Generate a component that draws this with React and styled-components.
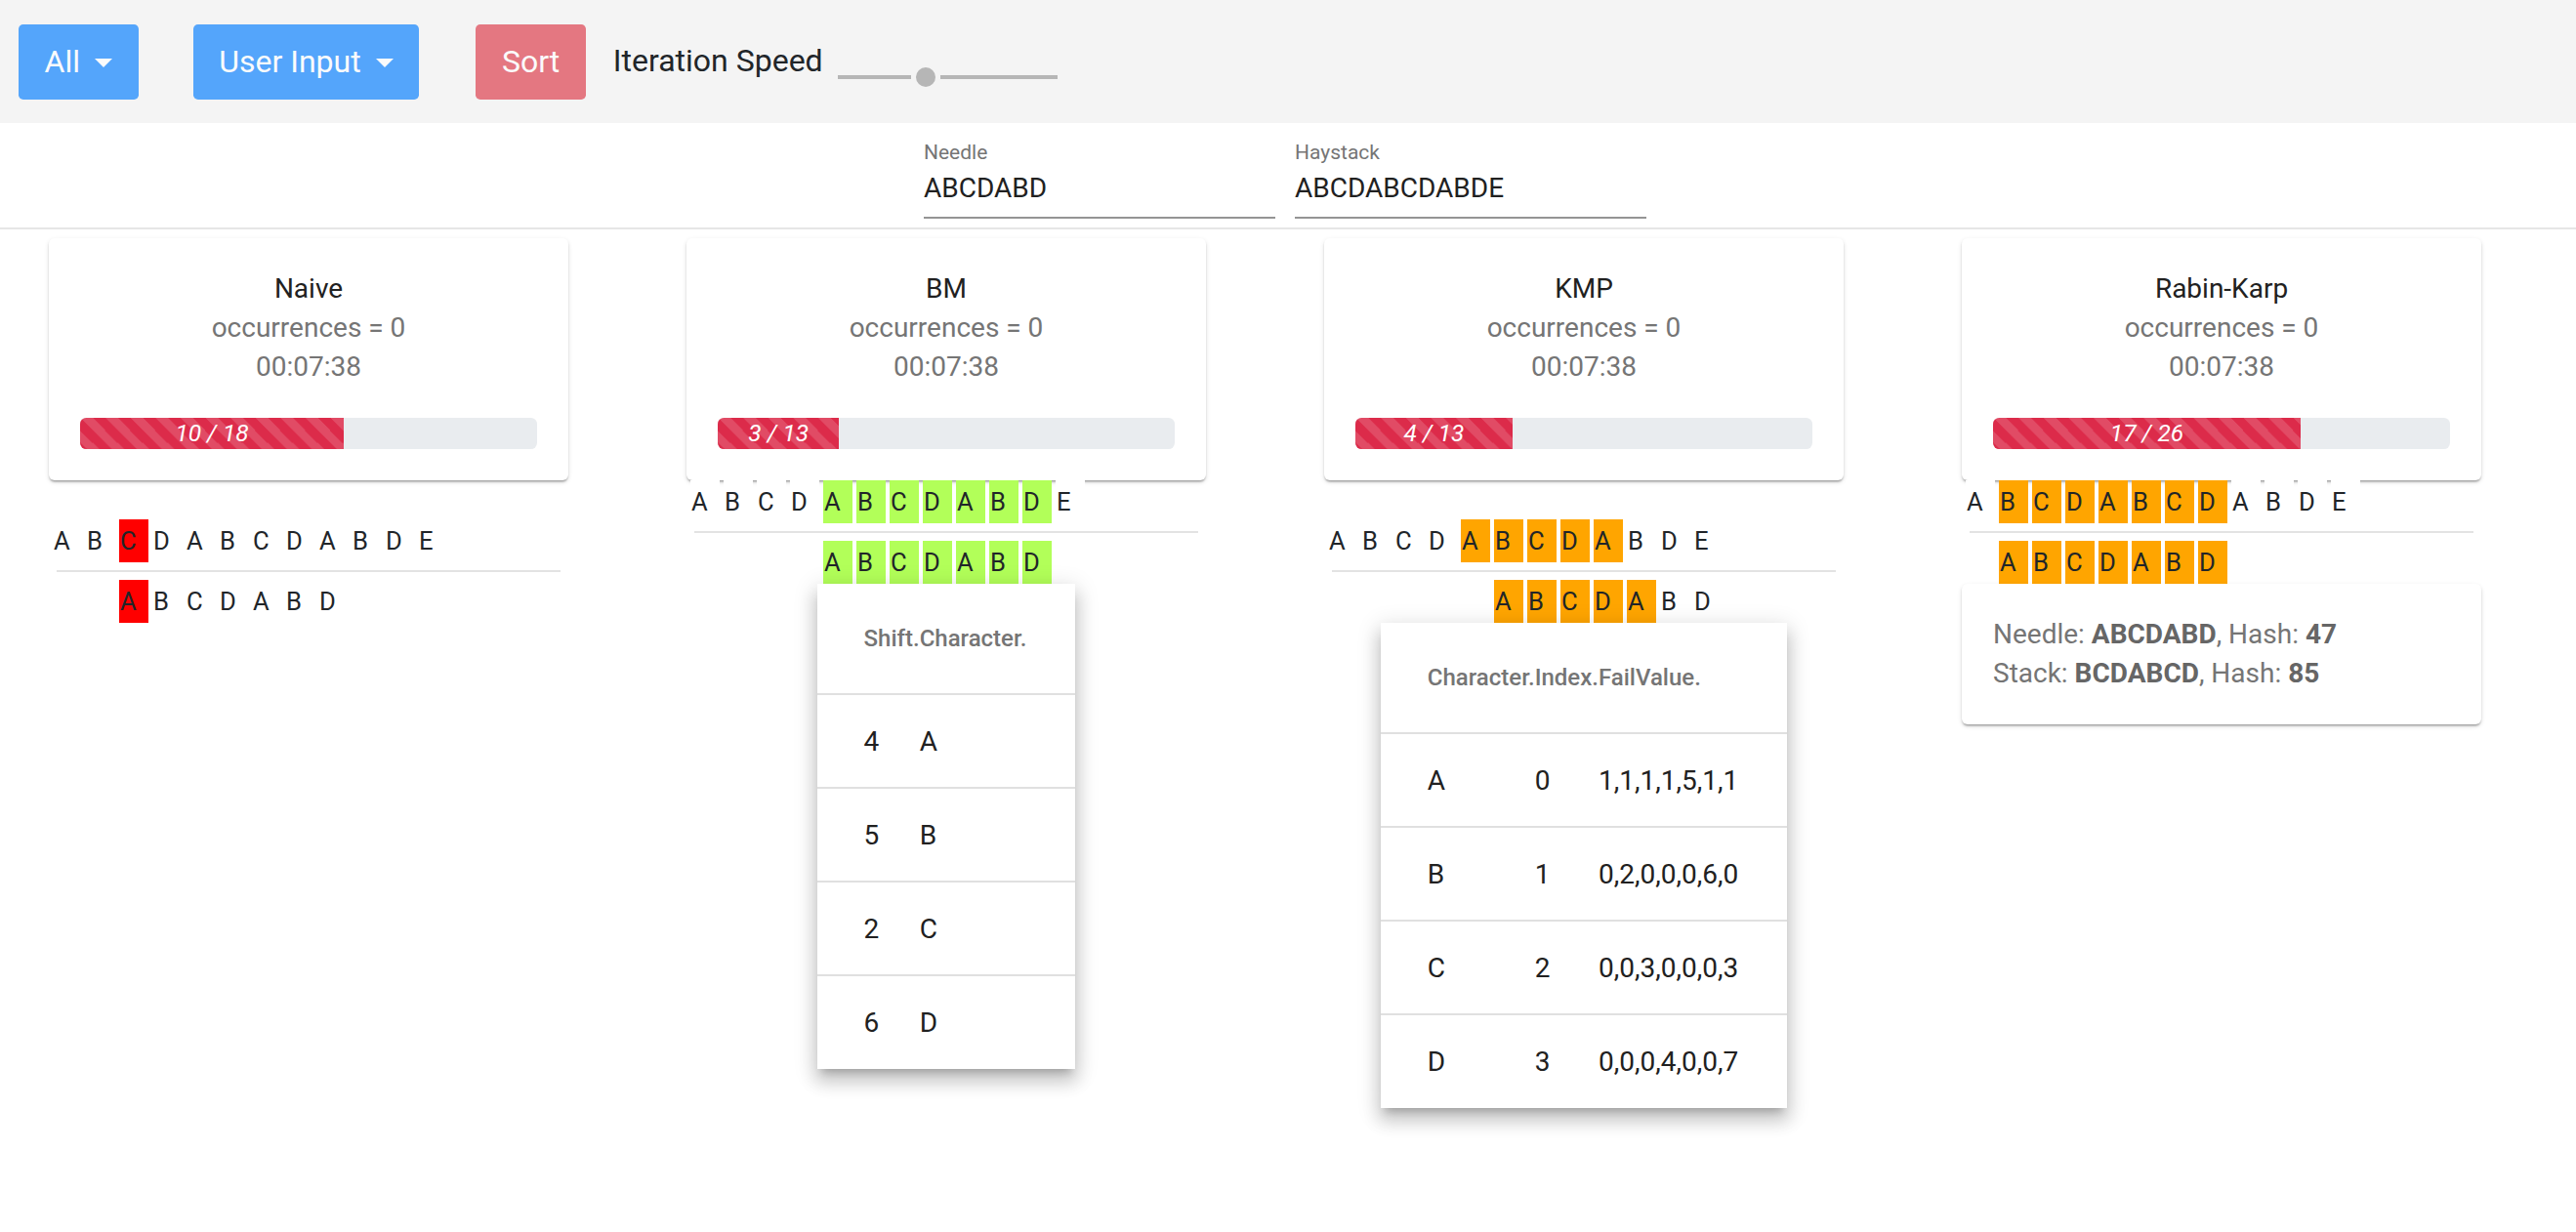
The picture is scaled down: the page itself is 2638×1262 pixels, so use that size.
import styled, { createGlobalStyle, css } from 'styled-components'

const GlobalStyle = createGlobalStyle`
  * { box-sizing: border-box; }
  body {
    margin: 0;
    background: #fff;
    font-family: Roboto, "Liberation Sans", sans-serif;
    color: #212529;
  }
`

const TopBar = styled.div`
    display: flex;
    align-items: center;
    height: 126px;
    padding: 0 19px;
    background-color: #f4f4f4;
`

const Button = styled.button`
    display: inline-flex;
    align-items: center;
    height: 77px;
    padding: 0 25.6px;
    margin-right: ${p => p.$gap || 0}px;
    font: 400 32px/48px Roboto, "Liberation Sans", sans-serif;
    color: #fff;
    background-color: ${p => (p.$danger ? '#dc3545' : '#007bff')};
    border: 1.6px solid transparent;
    border-radius: 4.8px;
    opacity: 0.65;

    ${p => p.$caret && css`
        &::after {
            content: '';
            margin-left: 15px;
            margin-top: 2px;
            border-top: 9.6px solid #fff;
            border-left: 9.6px solid transparent;
            border-right: 9.6px solid transparent;
        }
    `}
`

const SpeedLabel = styled.span`
    font-size: 32px;
    line-height: 48px;
    color: #212529;
    margin-bottom: 3px;
`

const Slider = styled.div`
    display: flex;
    align-items: center;
    gap: 5px;
    margin: 32px 0 0 15px;
`

const Track = styled.div`
    width: ${p => p.$w}px;
    height: 4px;
    background-color: #b6b6b6;
`

const Thumb = styled.div`
    width: 20px;
    height: 20px;
    border-radius: 50%;
    background-color: #b6b6b6;
`

const InputBar = styled.div`
    display: flex;
    justify-content: center;
    gap: 20px;
    padding: 20px 6px 9px 0;
    border-bottom: 2px solid #e6e6e6;
`

const Field = styled.div`
    width: 360px;
    display: flex;
    flex-direction: column;
    border-bottom: 2px solid #949494;
    padding-bottom: 13px;

    & > label {
        font-size: 21px;
        line-height: 21px;
        color: #757575;
        margin-bottom: 10px;
    }
    & > span {
        font-size: 28px;
        line-height: 32px;
        color: #212121;
    }
`

const Board = styled.div`
    display: flex;
    padding: 9px 0 60px;
`

const Column = styled.div`
    flex-shrink: 0;
    width: 653px;
    padding-left: 50px;
`

const Inner = styled.div`
    width: 532px;
    display: flex;
    flex-direction: column;
`

const Paper = styled.div`
    background-color: #fff;
    border-radius: 6px;
    box-shadow: 0 3px 2px -2px rgba(0, 0, 0, 0.22), 0 2px 2px rgba(0, 0, 0, 0.14), 0 2px 5px rgba(0, 0, 0, 0.12);
    padding: 32px;
    font-size: 28px;
    line-height: 40px;
    color: #757575;
`

const Card = styled(Paper)`
    text-align: center;

    & > h1 {
        margin: 0;
        font-size: 28px;
        font-weight: 400;
        color: #212121;
    }
    & > p {
        margin: 0;
    }
`

const Progress = styled.div`
    display: flex;
    height: 32px;
    margin-top: 32px;
    border-radius: 6.4px;
    overflow: hidden;
    background-color: #e9ecef;
`

const ProgressFill = styled.div`
    display: flex;
    align-items: center;
    justify-content: center;
    background-color: #dc2b4a;
    background-image: linear-gradient(45deg, rgba(255,255,255,.15) 25%, transparent 25%, transparent 50%, rgba(255,255,255,.15) 50%, rgba(255,255,255,.15) 75%, transparent 75%, transparent);
    background-size: 25.6px 25.6px;
    color: #fff;
    font-size: 24.5px;
    font-style: italic;
    white-space: nowrap;
`

const Strings = styled.div`
    margin-top: ${p => p.$gap}px;
    display: flex;
    flex-direction: column;
`

const CharRow = styled.div`
    height: 44px;
    padding-left: ${p => 2 + p.$offset * 34}px;
    white-space: nowrap;
    font-size: 0;
`

const Char = styled.span`
    display: inline-block;
    width: 30px;
    height: 44px;
    margin: 0 2px;
    padding-left: 1px;
    font-size: 25.6px;
    line-height: 44px;
    color: #212529;
    background-color: ${p => p.$bg || '#fff'};
`

const Divider = styled.div`
    height: 2px;
    margin: 8px 8px;
    background-color: #e3e3e3;
`

const Popup = styled.div`
    align-self: center;
    background-color: #fff;
    box-shadow: 0 8px 8px -5px rgba(0,0,0,.2), 0 13px 16px 2px rgba(0,0,0,.14), 0 5px 22px 3px rgba(0,0,0,.12);
`

const Table = styled.table`
    border-collapse: collapse;

    th, td {
        padding: 0;
        text-align: left;
        vertical-align: middle;
        white-space: nowrap;
    }
    th:first-child, td:first-child { padding-left: 48px; }
    th:last-child, td:last-child { padding-right: 50px; }

    th {
        height: 113px;
        font-size: 24px;
        font-weight: 500;
        color: #757575;
        border-bottom: 2px solid #e0e0e0;
    }
    td {
        height: 96px;
        font-size: 28px;
        color: #212121;
        border-bottom: 2px solid #e0e0e0;
    }
    tr:last-child td { border-bottom: none; }
`

const HashCard = styled(Paper)`
    & b {
        color: #666;
        font-weight: 700;
    }
`

const HAY = 'ABCDABCDABDE'.split('')
const NEEDLE = 'ABCDABD'.split('')

const algos = [
    { name: 'Naive', done: 10, total: 18, fill: 57.7, gap: 40, color: '#ff0000', hay: [2, 2], offset: 2, needle: [0, 0] },
    { name: 'BM', done: 3, total: 13, fill: 26.6, gap: 0, color: '#b2ff59', hay: [4, 10], offset: 4, needle: [0, 6],
      table: { head: ['Shift.', 'Character.'], rows: [['4', 'A'], ['5', 'B'], ['2', 'C'], ['6', 'D']] } },
    { name: 'KMP', done: 4, total: 13, fill: 34.4, gap: 40, color: '#ffa500', hay: [4, 8], offset: 5, needle: [0, 4],
      table: { head: ['Character.', 'Index.', 'FailValue.'], rows: [
        ['A', '0', '1,1,1,1,5,1,1'], ['B', '1', '0,2,0,0,0,6,0'], ['C', '2', '0,0,3,0,0,0,3'], ['D', '3', '0,0,0,4,0,0,7']] } },
    { name: 'Rabin-Karp', done: 17, total: 26, fill: 67.3, gap: 0, color: '#ffa500', hay: [1, 7], offset: 1, needle: [0, 6], hash: true },
]

function Row({ chars, range, color, offset = 0 }) {
    return (
        <CharRow $offset={offset}>
            {chars.map((c, i) => (
                <Char key={i} $bg={i >= range[0] && i <= range[1] ? color : null}>{c}</Char>
            ))}
        </CharRow>
    )
}

function AlgoColumn({ algo }) {
    return (
        <Column>
            <Inner>
                <Card>
                    <h1>{algo.name}</h1>
                    <p>occurrences = 0</p>
                    <p>00:07:38</p>
                    <Progress>
                        <ProgressFill style={{ width: `${algo.fill}%` }}>{algo.done} / {algo.total}</ProgressFill>
                    </Progress>
                </Card>
                <Strings $gap={algo.gap}>
                    <Row chars={HAY} range={algo.hay} color={algo.color} />
                    <Divider />
                    <Row chars={NEEDLE} range={algo.needle} color={algo.color} offset={algo.offset} />
                </Strings>
                {algo.table && (
                    <Popup>
                        <Table>
                            <thead>
                                <tr>{algo.table.head.map(h => <th key={h}>{h}</th>)}</tr>
                            </thead>
                            <tbody>
                                {algo.table.rows.map((r, i) => (
                                    <tr key={i}>{r.map((v, j) => <td key={j}>{v}</td>)}</tr>
                                ))}
                            </tbody>
                        </Table>
                    </Popup>
                )}
                {algo.hash && (
                    <HashCard>
                        <div>Needle: <b>ABCDABD</b>, Hash: <b>47</b></div>
                        <div>Stack: <b>BCDABCD</b>, Hash: <b>85</b></div>
                    </HashCard>
                )}
            </Inner>
        </Column>
    )
}

export default function App() {
    return (
        <>
            <GlobalStyle />
            <TopBar>
                <Button $caret $gap={56}>All</Button>
                <Button $caret $gap={58}>User Input</Button>
                <Button $danger $gap={28}>Sort</Button>
                <SpeedLabel>Iteration Speed</SpeedLabel>
                <Slider>
                    <Track $w={75} />
                    <Thumb />
                    <Track $w={120} />
                </Slider>
            </TopBar>
            <InputBar>
                <Field>
                    <label>Needle</label>
                    <span>ABCDABD</span>
                </Field>
                <Field>
                    <label>Haystack</label>
                    <span>ABCDABCDABDE</span>
                </Field>
            </InputBar>
            <Board>
                {algos.map(a => <AlgoColumn key={a.name} algo={a} />)}
            </Board>
        </>
    )
}
